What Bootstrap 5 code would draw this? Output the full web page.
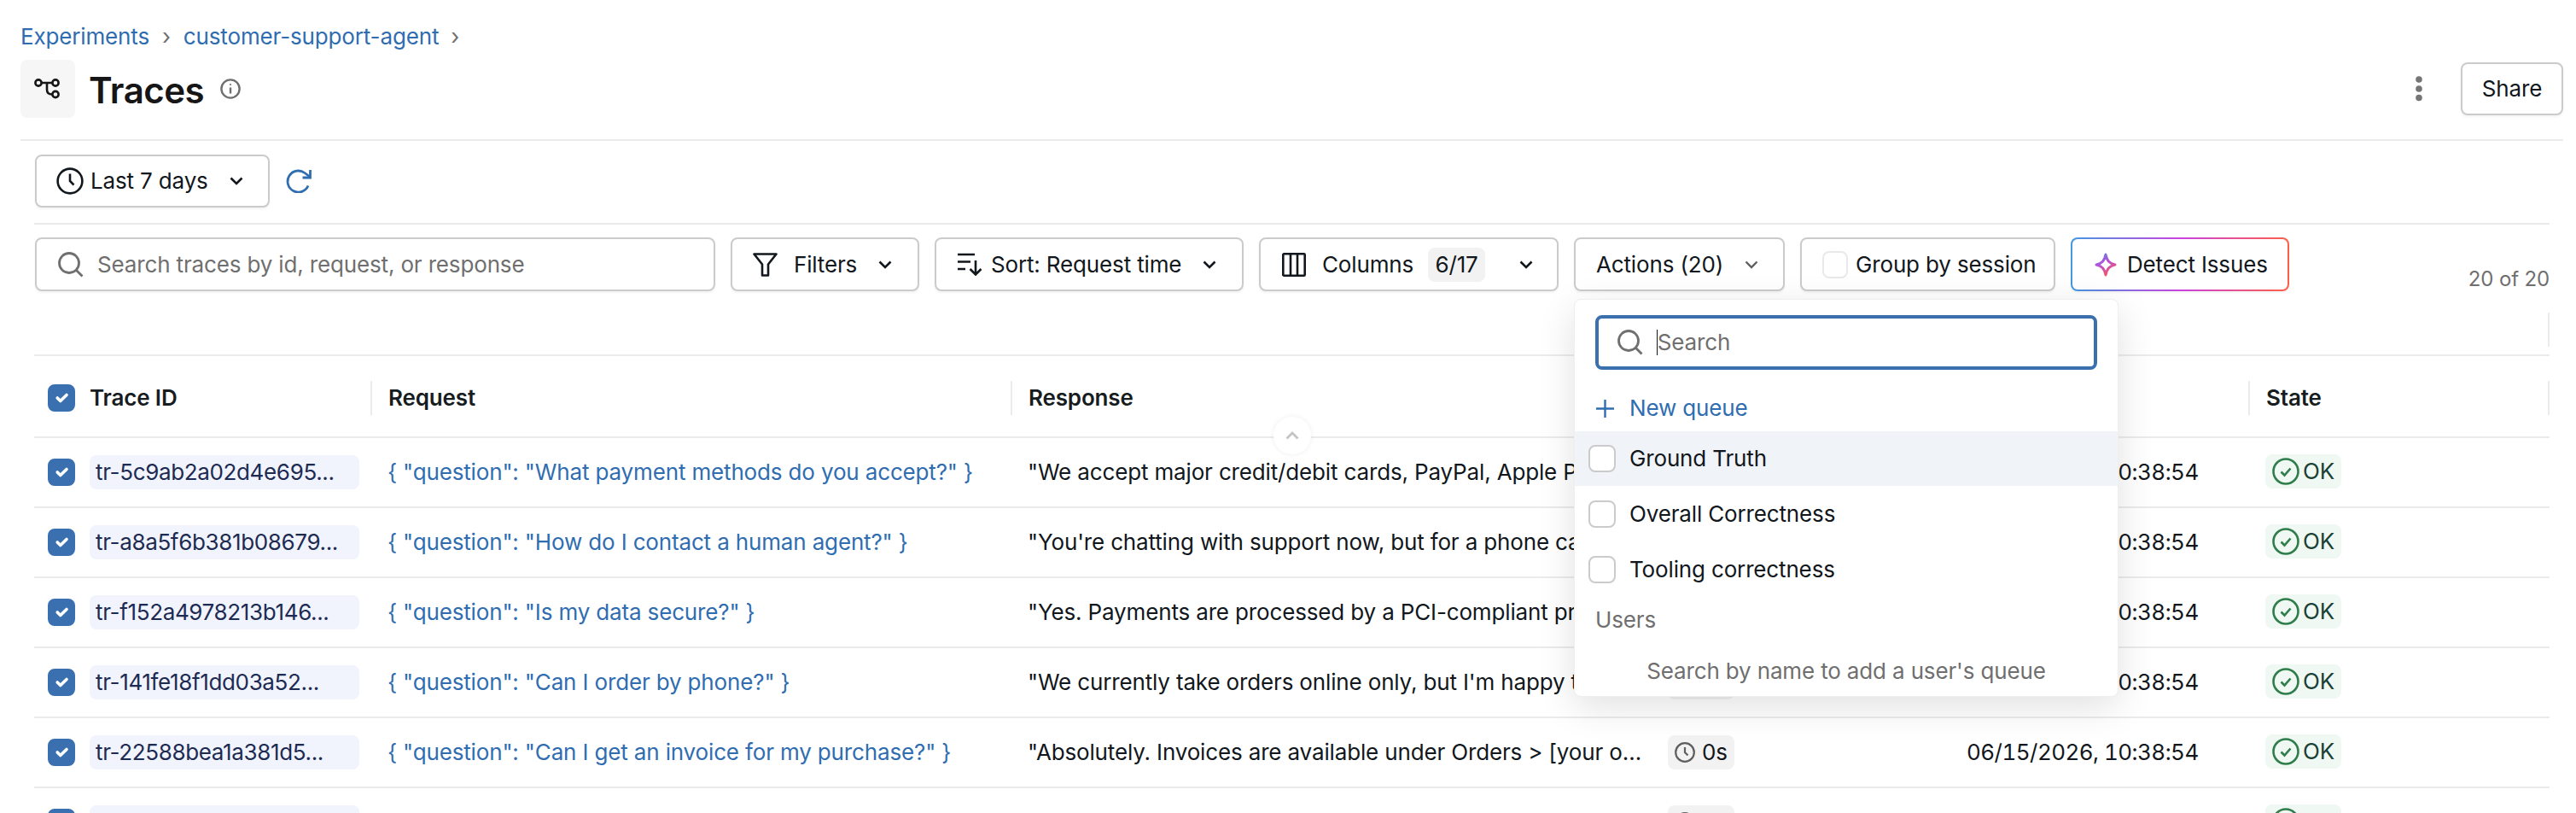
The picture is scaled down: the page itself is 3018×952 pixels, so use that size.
<!DOCTYPE html>
<html lang="en">
  <head>
    <meta charset="UTF-8" />
    <meta name="viewport" content="width=device-width, initial-scale=1.0" />
    <title>Traces - customer-support-agent</title>
    <link
      rel="stylesheet"
      href="https://cdn.jsdelivr.net/npm/bootstrap@5.3.3/dist/css/bootstrap.min.css"
    />
    <style>
      html,
      body {
        height: 952px;
        overflow: hidden;
      }

      body {
        font-family: Inter, "Liberation Sans", sans-serif;
        font-size: 26px;
        line-height: 32px;
        letter-spacing: -0.15px;
        color: #11171c;
        background-color: #fff;
      }

      svg {
        flex-shrink: 0;
        display: block;
      }

      .page-wrap {
        padding: 27px 15px 0 24px;
      }

      .crumbs {
        --bs-breadcrumb-margin-bottom: 0;
        --bs-breadcrumb-item-padding-x: 15px;
        --bs-breadcrumb-divider-color: #6f6f6f;
        --bs-breadcrumb-divider: "›";
      }

      .crumbs a,
      .req-link,
      .new-queue {
        color: #2f6db0;
        text-decoration: none;
      }

      .crumb-end::after {
        content: "›";
        color: #6f6f6f;
        margin-left: 14px;
      }

      .title-row {
        margin-top: 11px;
        height: 68px;
      }

      .title-tile {
        width: 64px;
        height: 68px;
        background-color: #f6f6f6;
        border-radius: 8px;
      }

      .page-title {
        font-size: 42px;
        line-height: 56px;
        font-weight: 600;
        letter-spacing: -0.5px;
        color: #161616;
        margin: 3px 0 0 16px;
      }

      .info-icon {
        margin-left: 19px;
      }

      .dots-icon {
        margin-right: 43px;
      }

      .rule-line {
        height: 2px;
        background-color: #ebebeb;
        margin-top: 25px;
      }

      .content-wrap {
        padding: 0 31px 0 40px;
      }

      .time-row {
        padding: 16px 0 18px 1px;
        border-bottom: 2px solid #ebebeb;
      }

      .tool-btn {
        display: inline-flex;
        align-items: center;
        flex-shrink: 0;
        height: 63px;
        padding: 0 0 0 24px;
        font-size: 26px;
        line-height: 32px;
        letter-spacing: -0.15px;
        color: #11171c;
        background-color: #fff;
        border: 2px solid #cbcbcb;
        border-radius: 8px;
        box-shadow: 0 2px 3px rgba(0, 0, 0, 0.05);
        white-space: nowrap;
      }

      .chev {
        margin-left: 25px;
      }

      .share-btn {
        width: 120px;
        height: 62px;
        padding: 0;
        justify-content: center;
      }

      .picker-btn {
        width: 275px;
        height: 62px;
        padding-left: 23px;
      }

      .refresh-icon {
        margin-left: 19px;
      }

      .tool-row {
        height: 78px;
        padding: 15px 0 0 1px;
        gap: 18px;
      }

      .search-wrap {
        width: 797px;
        height: 63px;
        padding: 0 25px;
        border: 2px solid #cbcbcb;
        border-radius: 8px;
        box-shadow: 0 2px 3px rgba(0, 0, 0, 0.05);
        flex-shrink: 0;
      }

      .plain-input {
        border: 0;
        outline: 0;
        padding: 0;
        width: 100%;
        font-size: 26px;
        line-height: 32px;
        letter-spacing: -0.15px;
        color: #11171c;
      }

      .plain-input::placeholder {
        color: #6f6f6f;
        opacity: 1;
      }

      .filter-btn {
        width: 221px;
      }

      .filter-label {
        margin-left: 19px;
      }

      .sort-btn {
        width: 362px;
        padding-left: 25px;
      }

      .sort-label {
        margin-left: 10px;
      }

      .cols-btn {
        width: 351px;
        padding-left: 25px;
      }

      .cols-label {
        margin-left: 19px;
      }

      .count-chip {
        width: 67px;
        height: 40px;
        margin-left: 17px;
        background-color: #f2f2f2;
        border-radius: 8px;
      }

      .cols-btn .chev {
        margin-left: 40px;
      }

      .actions-btn {
        width: 247px;
      }

      .group-btn {
        width: 299px;
      }

      .group-label {
        margin-left: 9px;
      }

      .detect-btn {
        width: 256px;
        padding-left: 26px;
        border-color: transparent;
        background: linear-gradient(#fff, #fff) padding-box,
          linear-gradient(90deg, #4299e0, #ca42e0 50%, #ff5f46) border-box;
      }

      .detect-label {
        margin-left: 12px;
      }

      .count-text {
        color: #6f6f6f;
        font-size: 24px;
        margin-top: 33px;
      }

      .tick-box.form-check-input {
        width: 32px;
        height: 32px;
        margin: 0;
        flex-shrink: 0;
        border: 2px solid #cbcbcb;
        border-radius: 8px;
        background-size: 24px;
      }

      .tick-box.form-check-input:checked {
        background-color: #3a70b0;
        border-color: #3a70b0;
      }

      .tick-box.soft-box {
        width: 30px;
        border-color: #e9e9e9;
      }

      .header-strip {
        height: 76px;
        padding-top: 25px;
        border-bottom: 2px solid #ebebeb;
      }

      .col-sep {
        width: 2px;
        height: 40px;
        background-color: #ebebeb;
      }

      .table-wrap {
        width: 2947px;
        height: 535px;
      }

      .table-clip {
        height: 535px;
        overflow: hidden;
      }

      .trace-table {
        table-layout: fixed;
        width: 2947px;
        margin: 0;
        color: #11171c;
      }

      .trace-table > thead > tr > th {
        height: 95px;
        padding: 4px 0 0;
        vertical-align: middle;
        font-weight: 600;
        border-bottom: 2px solid #ebebeb;
        color: #161c20;
      }

      .head-cell {
        height: 40px;
        padding-left: 19px;
        border-right: 2px solid #ebebeb;
      }

      .head-first {
        padding-left: 16px;
        gap: 17px;
      }

      .trace-table > tbody > tr > td {
        height: 82px;
        padding: 0 8px 0 18px;
        vertical-align: middle;
        border-bottom: 2px solid #ebebeb;
      }

      .trace-table > tbody > tr > td.first-cell {
        padding: 0 15px 0 16px;
      }

      .id-wrap {
        gap: 17px;
      }

      .id-chip {
        width: 316px;
        height: 40px;
        padding-left: 7px;
        color: #1d2b52;
        background-color: #f1f4fd;
        border-radius: 8px;
        white-space: nowrap;
        letter-spacing: -0.35px;
      }

      .time-chip {
        height: 40px;
        padding: 0 8px;
        background-color: #f2f2f2;
        border-radius: 8px;
      }

      .date-text {
        font-variant-numeric: tabular-nums;
        letter-spacing: -0.55px;
      }

      .ok-chip {
        height: 40px;
        padding: 0 8px;
        color: #1a4135;
        background-color: #f0f8f4;
        border-radius: 8px;
      }

      .collapse-handle {
        left: 1456px;
        top: 75px;
        width: 36px;
        height: 36px;
        background-color: #fff;
        border-radius: 50%;
        box-shadow: 0 0 0 4px #fff, 0 0 6px 4px rgba(0, 0, 0, 0.07);
      }

      .queue-menu {
        display: block;
        left: 0;
        top: 72px;
        width: 638px;
        height: 466px;
        padding: 18px 0 0;
        border: 1px solid #efefef;
        border-radius: 8px;
        box-shadow: 0 12px 44px rgba(0, 0, 0, 0.12);
        font-size: 26px;
        letter-spacing: -0.15px;
        z-index: 20;
      }

      .menu-search {
        margin: 0 24px;
        height: 64px;
        padding: 0 0 0 22px;
        border: 4px solid #3b70ae;
        border-radius: 8px;
      }

      .fake-caret {
        width: 2px;
        height: 30px;
        margin: 0 -1px 0 0;
        background-color: #11171c;
      }

      .new-queue {
        margin: 28px 24px 0;
        height: 34px;
      }

      .new-queue-text {
        margin-left: 17px;
      }

      .queue-row.dropdown-item {
        height: 65px;
        padding: 0 16px;
        color: #11171c;
      }

      .queue-row.hover-row {
        height: 64px;
        background-color: #f0f3f8;
      }

      .queue-name {
        margin-left: 16px;
      }

      .menu-first {
        margin-top: 10px;
      }

      .menu-label {
        color: #6f6f6f;
        margin: 11px 24px 0;
      }

      .menu-hint {
        color: #6f6f6f;
        margin-top: 28px;
      }
    </style>
  </head>
  <body>
    <div class="page-wrap">
      <nav aria-label="breadcrumb">
        <ol class="breadcrumb crumbs">
          <li class="breadcrumb-item"><a href="#">Experiments</a></li>
          <li class="breadcrumb-item crumb-end"><a href="#">customer-support-agent</a></li>
        </ol>
      </nav>

      <div class="title-row d-flex align-items-center">
        <div class="title-tile d-flex align-items-center justify-content-center">
          <svg width="32" height="26" viewBox="0 0 32 26" fill="none" stroke="#161616" stroke-width="2.6">
            <circle cx="5" cy="6" r="3.6" />
            <circle cx="25" cy="6" r="3.6" />
            <circle cx="25" cy="19.5" r="3.6" />
            <path d="M9 6h12M15 6v8c0 3.5 2 5.5 6 5.5" />
          </svg>
        </div>
        <h1 class="page-title">Traces</h1>
        <svg class="info-icon me-auto" width="24" height="24" viewBox="0 0 24 24" fill="none" stroke="#6f6f6f" stroke-width="2.4">
          <circle cx="12" cy="12" r="10.6" />
          <path d="M12 10.5v7" />
          <circle cx="12" cy="7" r="1.1" fill="#6f6f6f" stroke="none" />
        </svg>
        <svg class="dots-icon" width="12" height="32" viewBox="0 0 12 32" fill="#757575">
          <circle cx="6" cy="5" r="3.8" />
          <circle cx="6" cy="16" r="3.8" />
          <circle cx="6" cy="26.5" r="3.8" />
        </svg>
        <button type="button" class="btn tool-btn share-btn">Share</button>
      </div>
      <div class="rule-line"></div>
    </div>

    <div class="content-wrap">
      <div class="time-row d-flex align-items-center">
        <button type="button" class="btn tool-btn picker-btn">
          <svg width="32" height="32" viewBox="0 0 32 32" fill="none" stroke="#11171c" stroke-width="2.6">
            <circle cx="16" cy="16" r="14.4" />
            <path d="M16 7.5V16l4.500 4.500" />
          </svg>
          <span class="ms-2">Last 7 days</span>
          <svg class="chev" width="16" height="10" viewBox="0 0 16 10" fill="none" stroke="#11171c" stroke-width="2.6"><path d="M1.500 1.500 8 8l6.500-6.500" /></svg>
        </button>
        <svg class="refresh-icon" width="30" height="28" viewBox="0 0 30 28" fill="none" stroke="#2f6db0" stroke-width="2.8">
          <path d="M26 19.500A12.500 12.500 0 1 1 22 4.500L28 9" />
          <path d="M28.500 1v9h-9" />
        </svg>
      </div>

      <div class="tool-row d-flex">
        <div class="search-wrap d-flex align-items-center">
          <svg width="30" height="30" viewBox="0 0 30 30" fill="none" stroke="#6f6f6f" stroke-width="2.8">
            <circle cx="13" cy="13" r="11.500" />
            <path d="m21.500 21.500 7 7" />
          </svg>
          <input class="plain-input ms-3" type="text" placeholder="Search traces by id, request, or response" />
        </div>
        <button type="button" class="btn tool-btn filter-btn">
          <svg width="29" height="28" viewBox="0 0 29 28" fill="none" stroke="#11171c" stroke-width="2.6">
            <path d="M1.500 1.500h26L18 13.500V26.500h-7V13.500z" stroke-linejoin="round" />
          </svg>
          <span class="filter-label">Filters</span>
          <svg class="chev" width="16" height="10" viewBox="0 0 16 10" fill="none" stroke="#11171c" stroke-width="2.6"><path d="M1.500 1.500 8 8l6.500-6.500" /></svg>
        </button>
        <button type="button" class="btn tool-btn sort-btn">
          <svg width="29" height="27" viewBox="0 0 29 27" fill="none" stroke="#11171c" stroke-width="2.6">
            <path d="M0 2h20M0 10.500h15M0 19h9" />
            <path d="M21 9v16M14.500 19l6.500 6.500 6.500-6.500" />
          </svg>
          <span class="sort-label">Sort: Request time</span>
          <svg class="chev" width="16" height="10" viewBox="0 0 16 10" fill="none" stroke="#11171c" stroke-width="2.6"><path d="M1.500 1.500 8 8l6.500-6.500" /></svg>
        </button>
        <button type="button" class="btn tool-btn cols-btn">
          <svg width="28" height="28" viewBox="0 0 28 28" fill="none" stroke="#11171c" stroke-width="2.6">
            <rect x="1.300" y="1.300" width="25.400" height="25.400" rx="1" />
            <path d="M10 1.300v25.400M18 1.300v25.400" />
          </svg>
          <span class="cols-label">Columns</span>
          <span class="count-chip d-inline-flex align-items-center justify-content-center">6/17</span>
          <svg class="chev" width="16" height="10" viewBox="0 0 16 10" fill="none" stroke="#11171c" stroke-width="2.6"><path d="M1.500 1.500 8 8l6.500-6.500" /></svg>
        </button>

        <div class="position-relative actions-box">
          <button type="button" class="btn tool-btn actions-btn">
            Actions (20)
            <svg class="chev" width="16" height="10" viewBox="0 0 16 10" fill="none" stroke="#5f5f5f" stroke-width="2.4"><path d="M1.500 1.500 8 8l6.500-6.500" /></svg>
          </button>
          <div class="dropdown-menu position-absolute queue-menu">
            <div class="menu-search d-flex align-items-center">
              <svg width="30" height="30" viewBox="0 0 30 30" fill="none" stroke="#6f6f6f" stroke-width="2.8">
                <circle cx="13" cy="13" r="11.500" />
                <path d="m21.500 21.500 7 7" />
              </svg>
              <span class="fake-caret ms-3"></span>
              <input class="plain-input" type="text" placeholder="Search" />
            </div>
            <a class="new-queue d-flex align-items-center" href="#">
              <svg width="23" height="23" viewBox="0 0 23 23" fill="none" stroke="#2f6db0" stroke-width="2.4"><path d="M11.500 1v21M1 11.500h21" /></svg>
              <span class="new-queue-text">New queue</span>
            </a>
            <a class="dropdown-item queue-row hover-row menu-first d-flex align-items-center" href="#">
              <input class="form-check-input tick-box" type="checkbox" />
              <span class="queue-name">Ground Truth</span>
            </a>
            <a class="dropdown-item queue-row d-flex align-items-center" href="#">
              <input class="form-check-input tick-box" type="checkbox" />
              <span class="queue-name">Overall Correctness</span>
            </a>
            <a class="dropdown-item queue-row d-flex align-items-center" href="#">
              <input class="form-check-input tick-box" type="checkbox" />
              <span class="queue-name">Tooling correctness</span>
            </a>
            <div class="menu-label">Users</div>
            <div class="menu-hint text-center">Search by name to add a user's queue</div>
          </div>
        </div>

        <button type="button" class="btn tool-btn group-btn">
          <input class="form-check-input tick-box soft-box" type="checkbox" />
          <span class="group-label">Group by session</span>
        </button>
        <button type="button" class="btn tool-btn detect-btn">
          <svg width="26" height="28" viewBox="0 0 26 28" fill="none" stroke="url(#sparkGrad)" stroke-width="3">
            <defs>
              <linearGradient id="sparkGrad" x1="0" y1="0" x2="0.5" y2="1">
                <stop offset="0" stop-color="#5a86e8" />
                <stop offset="0.5" stop-color="#b84fd8" />
                <stop offset="1" stop-color="#f0566a" />
              </linearGradient>
            </defs>
            <path d="M13 2c1.500 7.500 4.500 10.500 11 12-6.500 1.500-9.500 4.500-11 12-1.500-7.500-4.500-10.500-11-12 6.500-1.500 9.500-4.500 11-12z" stroke-linejoin="round" />
          </svg>
          <span class="detect-label">Detect Issues</span>
        </button>
        <span class="count-text ms-auto">20 of 20</span>
      </div>

      <div class="header-strip d-flex justify-content-end">
        <span class="col-sep"></span>
      </div>

      <div class="table-wrap position-relative">
        <div class="table-clip">
          <table class="table trace-table" id="traceTable">
            <colgroup>
              <col style="width: 396px" />
              <col style="width: 750px" />
              <col style="width: 750px" />
              <col style="width: 350px" />
              <col style="width: 350px" />
              <col style="width: 351px" />
            </colgroup>
            <thead>
              <tr>
                <th>
                  <div class="head-cell head-first d-flex align-items-center">
                    <input class="form-check-input tick-box" type="checkbox" checked />
                    Trace ID
                  </div>
                </th>
                <th><div class="head-cell d-flex align-items-center">Request</div></th>
                <th><div class="head-cell d-flex align-items-center">Response</div></th>
                <th><div class="head-cell d-flex align-items-center">Execution time</div></th>
                <th><div class="head-cell d-flex align-items-center">Request time</div></th>
                <th><div class="head-cell d-flex align-items-center">State</div></th>
              </tr>
            </thead>
            <tbody></tbody>
          </table>
        </div>
        <div class="collapse-handle position-absolute d-flex align-items-center justify-content-center">
          <svg width="16" height="10" viewBox="0 0 16 10" fill="none" stroke="#c4c4c4" stroke-width="2.800"><path d="M1.500 8.500 8 2l6.500 6.500" /></svg>
        </div>
      </div>
    </div>

    <script>
      const rows = [
        {
          id: "tr-5c9ab2a02d4e695...",
          question: "What payment methods do you accept?",
          answer: "We accept major credit/debit cards, PayPal, Apple Pay, and other options at checkout.",
        },
        {
          id: "tr-a8a5f6b381b08679...",
          question: "How do I contact a human agent?",
          answer: "You're chatting with support now, but for a phone call you can reach us anytime.",
        },
        {
          id: "tr-f152a4978213b146...",
          question: "Is my data secure?",
          answer: "Yes. Payments are processed by a PCI-compliant provider and your data stays encrypted.",
        },
        {
          id: "tr-141fe18f1dd03a52...",
          question: "Can I order by phone?",
          answer: "We currently take orders online only, but I'm happy to walk you through it now.",
        },
        {
          id: "tr-22588bea1a381d5...",
          question: "Can I get an invoice for my purchase?",
          answer: "Absolutely. Invoices are available under Orders > [your order] in your account.",
        },
        { id: "", question: "", answer: "", blank: true },
      ];

      const clockIcon =
        '<svg width="24" height="24" viewBox="0 0 24 24" fill="none" stroke="#5f5f5f" stroke-width="2.2"><circle cx="12" cy="12" r="10.8"/><path d="M12 6v6l3.500 3.500"/></svg>';
      const okIcon =
        '<svg width="32" height="32" viewBox="0 0 32 32" fill="none" stroke="#2e7d4a" stroke-width="2.600"><circle cx="16" cy="16" r="14.500"/><path d="m10.500 16.500 4 4 7-8"/></svg>';

      document.querySelector("#traceTable tbody").innerHTML = rows
        .map(
          (r) => `
          <tr>
            <td class="first-cell">
              <div class="id-wrap d-flex align-items-center">
                <input class="form-check-input tick-box" type="checkbox" checked />
                <span class="id-chip d-flex align-items-center">${r.id}</span>
              </div>
            </td>
            <td class="text-truncate">${
              r.blank ? "" : `<a class="req-link" href="#">{ "question": "${r.question}" }</a>`
            }</td>
            <td class="text-truncate">${r.answer ? '"' + r.answer.replace(/>/g, "&gt;") + '"' : ""}</td>
            <td>
              <span class="time-chip d-inline-flex align-items-center gap-2">${clockIcon}0s</span>
            </td>
            <td class="date-text">${r.blank ? "" : "06/15/2026, 10:38:54"}</td>
            <td>
              <span class="ok-chip d-inline-flex align-items-center gap-1">${okIcon}OK</span>
            </td>
          </tr>`
        )
        .join("");
    </script>
    <script src="https://cdn.jsdelivr.net/npm/bootstrap@5.3.3/dist/js/bootstrap.bundle.min.js"></script>
  </body>
</html>
